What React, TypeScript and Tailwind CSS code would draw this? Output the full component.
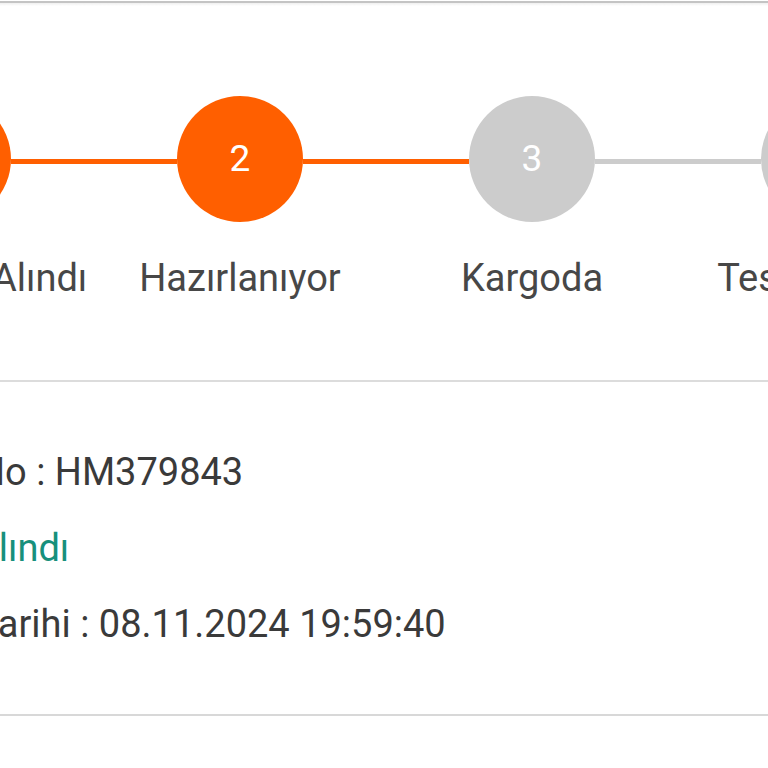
import React from "react";

type Step = { no: number; label: string; done: boolean };

const steps: Step[] = [
  { no: 1, label: "Siparişiniz Alındı", done: true },
  { no: 2, label: "Hazırlanıyor", done: true },
  { no: 3, label: "Kargoda", done: false },
  { no: 4, label: "Teslim Edildi", done: false },
];

const App = () => {
  return (
    <div
      className="w-[768px] h-[768px] overflow-hidden bg-white"
      style={{ fontFamily: "Roboto, 'Noto Sans', sans-serif" }}
    >
      <div className="pt-px">
        <div className="h-[2px] bg-[#c4c4c4]" />
        <div className="h-[3px] bg-gradient-to-b from-[#efefef] to-white" />
      </div>

      {/* stepper */}
      <div className="flex items-center ml-[-115px] mt-[90px] w-max">
        {steps.map((s, i) => (
          <React.Fragment key={s.no}>
            {i > 0 && (
              <div
                className={
                  "w-[166px] h-[5px] mt-[4px] " +
                  (steps[i - 1].done ? "bg-[#ff5f00]" : "bg-[#cccccc]")
                }
              />
            )}
            <div
              className={
                "w-[126px] h-[126px] rounded-full flex items-center justify-center text-white text-[37px] " +
                (s.done ? "bg-[#ff5f00]" : "bg-[#cccccc]")
              }
            >
              {s.no}
            </div>
          </React.Fragment>
        ))}
      </div>

      <div className="grid grid-cols-[repeat(4,292px)] ml-[-198px] mt-[34px] w-max">
        {steps.map((s) => (
          <div
            key={s.no}
            className="text-center text-[38px] leading-[44px] text-[#474747] whitespace-nowrap"
          >
            {s.label}
          </div>
        ))}
      </div>

      <div className="mt-[80px] h-[2px] bg-[#dcdcdc]" />

      {/* order info */}
      <div className="ml-[-147px] pt-[52px] pb-[52px] text-[38px] leading-[76px] text-[#3a3a3a] whitespace-nowrap">
        <p>Sipariş No : HM379843</p>
        <p className="text-[#17907c] ml-[-4px]">Sipariş Alındı</p>
        <p>Sipariş Tarihi : 08.11.2024 19:59:40</p>
      </div>

      <div className="h-[2px] bg-[#d8d8d8]" />
    </div>
  );
};

export default App;
